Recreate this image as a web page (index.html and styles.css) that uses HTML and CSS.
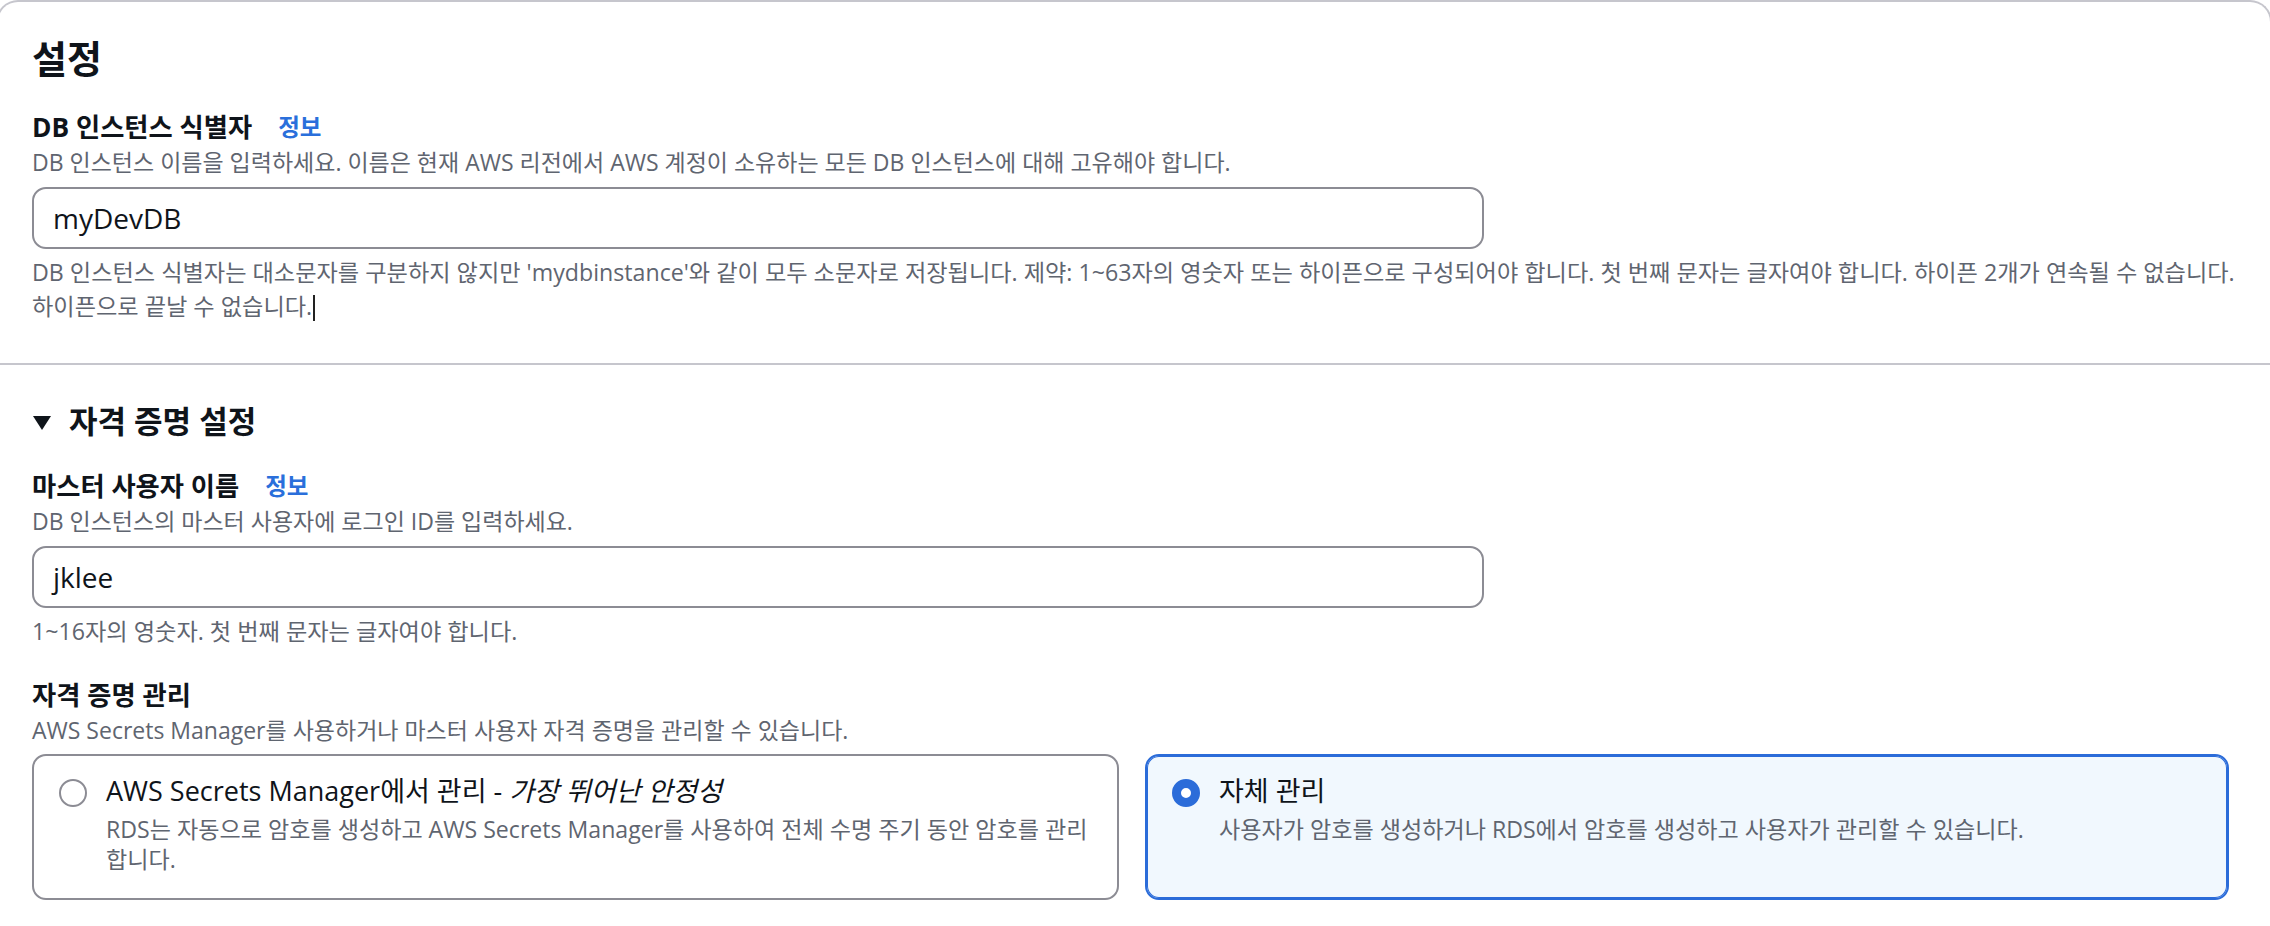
FILE: index.html
```html
<!DOCTYPE html>
<html lang="ko">
<head>
<meta charset="utf-8">
<title>설정</title>
<link rel="stylesheet" href="styles.css">
</head>
<body>
<div class="card">
  <section class="section section-settings">
    <h2 class="title">설정</h2>
    <div class="field">
      <div class="label-row"><span class="label">DB 인스턴스 식별자</span><a class="info">정보</a></div>
      <div class="desc">DB 인스턴스 이름을 입력하세요. 이름은 현재 AWS 리전에서 AWS 계정이 소유하는 모든 DB 인스턴스에 대해 고유해야 합니다.</div>
      <div class="input">myDevDB</div>
      <div class="hint">DB 인스턴스 식별자는 대소문자를 구분하지 않지만 'mydbinstance'와 같이 모두 소문자로 저장됩니다. 제약: 1~63자의 영숫자 또는 하이픈으로 구성되어야 합니다. 첫 번째 문자는 글자여야 합니다. 하이픈 2개가 연속될 수 없습니다.<br>하이픈으로 끝날 수 없습니다.<span class="ibeam"></span></div>
    </div>
  </section>
  <section class="section section-credentials">
    <div class="expander">
      <svg class="caret" viewBox="0 0 20 17" width="20" height="17"><polygon points="1,2 19,2 10,16" fill="#0f141a"/></svg>
      <span class="expander-title">자격 증명 설정</span>
    </div>
    <div class="field">
      <div class="label-row"><span class="label">마스터 사용자 이름</span><a class="info">정보</a></div>
      <div class="desc">DB 인스턴스의 마스터 사용자에 로그인 ID를 입력하세요.</div>
      <div class="input">jklee</div>
      <div class="hint">1~16자의 영숫자. 첫 번째 문자는 글자여야 합니다.</div>
    </div>
    <div class="field">
      <div class="label-row"><span class="label">자격 증명 관리</span></div>
      <div class="desc">AWS Secrets Manager를 사용하거나 마스터 사용자 자격 증명을 관리할 수 있습니다.</div>
      <div class="tiles">
        <div class="tile">
          <span class="radio"></span>
          <div class="tile-text">
            <div class="tile-title">AWS Secrets Manager에서 관리 - <em>가장 뛰어난 안정성</em></div>
            <div class="tile-desc">RDS는 자동으로 암호를 생성하고 AWS Secrets Manager를 사용하여 전체 수명 주기 동안 암호를 관리<br>합니다.</div>
          </div>
        </div>
        <div class="tile tile-selected">
          <span class="radio radio-checked"></span>
          <div class="tile-text">
            <div class="tile-title">자체 관리</div>
            <div class="tile-desc">사용자가 암호를 생성하거나 RDS에서 암호를 생성하고 사용자가 관리할 수 있습니다.</div>
          </div>
        </div>
      </div>
    </div>
  </section>
</div>
</body>
</html>
```

FILE: styles.css
```css
html, body {
  margin: 0;
  padding: 0;
  overflow: hidden;
  background: #ffffff;
}

body {
  font-family: "Open Sans", "Noto Sans CJK KR", sans-serif;
  color: #0f141a;
}

.card {
  box-sizing: border-box;
  width: 2276px;
  height: 1000px;
  margin-left: -4px;
  border: 2px solid #c6c6cd;
  border-bottom: none;
  border-radius: 22px 22px 0 0;
}

.section {
  padding: 0 40px 0 34px;
}

.section-settings {
  padding-top: 34px;
  padding-bottom: 40px;
  border-bottom: 2px solid #c6c6cd;
}

.section-credentials {
  padding-top: 38px;
}

.title {
  margin: 0;
  font-size: 38px;
  line-height: 44px;
  font-weight: 700;
}

.field {
  margin-top: 31px;
}

.label-row {
  display: flex;
  align-items: center;
  height: 32px;
}

.label {
  font-size: 26.3px;
  line-height: 32px;
  font-weight: 700;
}

.info {
  margin-left: 26px;
  font-size: 23.5px;
  line-height: 32px;
  font-weight: 700;
  color: #2a6fdb;
}

.desc {
  margin-top: 5px;
  font-size: 23px;
  line-height: 28px;
  color: #5f6570;
}

.input {
  box-sizing: border-box;
  margin-top: 11px;
  width: 1452px;
  height: 62px;
  border: 2px solid #8c8c94;
  border-radius: 14px;
  padding: 0 19px;
  display: flex;
  align-items: center;
  font-size: 28px;
  color: #0f141a;
}

.hint {
  margin-top: 6px;
  font-size: 23.2px;
  line-height: 34px;
  color: #5f6570;
  white-space: nowrap;
}

.ibeam {
  display: inline-block;
  width: 2px;
  height: 26px;
  margin-left: 1px;
  vertical-align: -6px;
  background: #222;
}

.expander {
  display: flex;
  align-items: center;
  height: 36px;
  gap: 17px;
}

.caret {
  display: block;
  margin-top: 2px;
}

.expander-title {
  font-size: 31px;
  line-height: 36px;
  font-weight: 700;
}

.tiles {
  margin-top: 10px;
  display: grid;
  grid-template-columns: 1087px 1084px;
  gap: 26px;
}

.tile {
  box-sizing: border-box;
  height: 146px;
  border: 2px solid #8c8c94;
  border-radius: 14px;
  padding: 20px 20px 0 25px;
  display: flex;
  align-items: flex-start;
  gap: 19px;
  background: #ffffff;
}

.tile-selected {
  border-color: #2b6cd9;
  box-shadow: inset 0 0 0 1px #2b6cd9;
  background: #f1f8fe;
}

.radio {
  box-sizing: border-box;
  flex: none;
  width: 28px;
  height: 28px;
  margin-top: 3px;
  border-radius: 50%;
  border: 2px solid #8c8c94;
  background: #ffffff;
}

.radio-checked {
  border: 9px solid #2b6cd9;
  background: #ffffff;
}

.tile-text {
  flex: 1;
  min-width: 0;
}

.tile-title {
  font-size: 27px;
  line-height: 30px;
  color: #0f141a;
}

.tile-title em {
  font-style: italic;
}

.tile-desc {
  margin-top: 8px;
  font-size: 23.1px;
  line-height: 30px;
  color: #5f6570;
  white-space: nowrap;
}
```
